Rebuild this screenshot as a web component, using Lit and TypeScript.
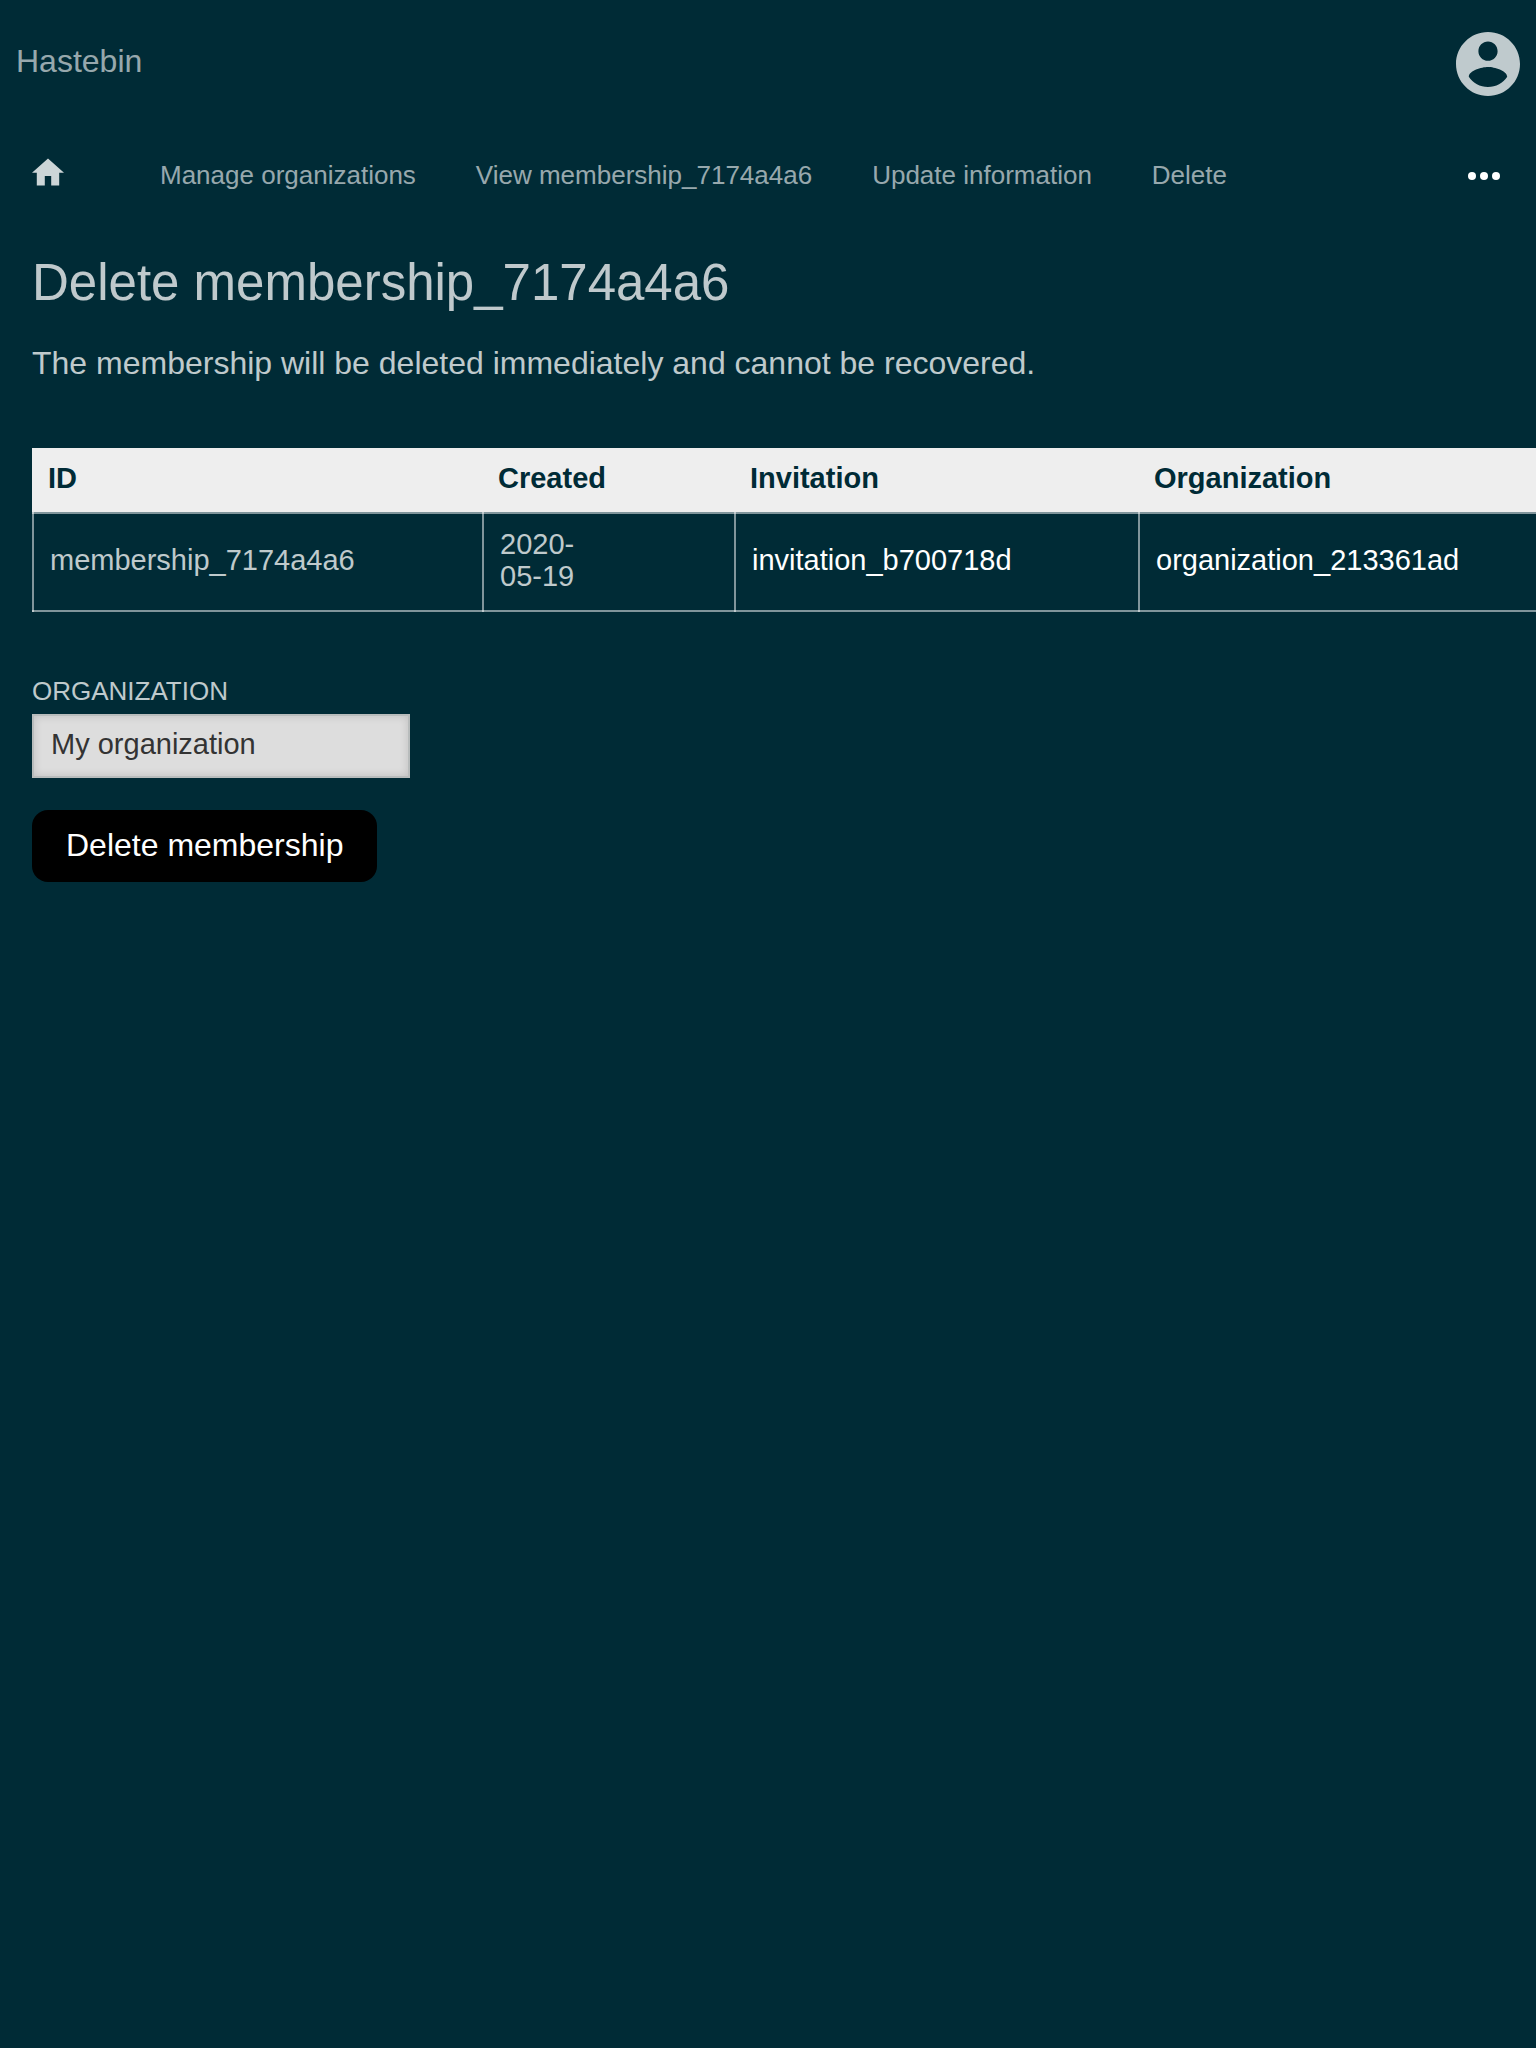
import { LitElement, html, css } from "lit";
import { customElement, property } from "lit/decorators.js";

@customElement("page-header")
class PageHeader extends LitElement {
  static styles = css`
    .bar {
      display: flex;
      justify-content: space-between;
      align-items: flex-start;
      padding: 32px 16px;
    }
    .title {
      font-size: 32px;
      line-height: 58px;
      color: rgba(255, 255, 255, 0.6);
      text-decoration: none;
    }
    .account {
      display: block;
      padding: 0;
      border: 0;
      background: none;
      color: #bfcacd;
      cursor: pointer;
    }
    .account svg {
      display: block;
      width: 64px;
      height: 64px;
    }
  `;

  render() {
    return html`
      <header class="bar">
        <a class="title" href="#home">Hastebin</a>
        <button class="account" type="button" aria-label="Account">
          <svg viewBox="2 2 20 20" fill="currentColor" aria-hidden="true">
            <path
              d="M12 2C6.48 2 2 6.48 2 12s4.48 10 10 10 10-4.48 10-10S17.52 2 12 2zm0 3c1.66 0 3 1.34 3 3s-1.34 3-3 3-3-1.34-3-3 1.34-3 3-3zm0 14.2c-2.5 0-4.71-1.28-6-3.22.03-1.99 4-3.08 6-3.08 1.99 0 5.97 1.09 6 3.08-1.29 1.94-3.5 3.22-6 3.22z"
            />
          </svg>
        </button>
      </header>
    `;
  }
}

@customElement("page-nav")
class PageNav extends LitElement {
  @property({ attribute: false }) items: string[] = [];

  static styles = css`
    .nav {
      display: flex;
      align-items: center;
      height: 96px;
      padding: 0 36px 0 32px;
    }
    .home {
      color: #ccd5d7;
      padding-bottom: 8px;
      margin-right: 96px;
    }
    .home svg {
      display: block;
      width: 32px;
      height: 28px;
    }
    .links {
      display: flex;
      flex: 1;
      gap: 60px;
      margin: 0;
      padding: 0 0 2px;
      list-style: none;
    }
    .link {
      font-size: 26px;
      line-height: 32px;
      color: rgba(255, 255, 255, 0.6);
      text-decoration: none;
      white-space: nowrap;
    }
    .more {
      padding: 0;
      border: 0;
      background: none;
      color: #fff;
      cursor: pointer;
    }
    .more svg {
      display: block;
      width: 32px;
      height: 8px;
    }
  `;

  render() {
    return html`
      <nav class="nav">
        <a class="home" href="#home" aria-label="Home">
          <svg viewBox="2 3 20 17" fill="currentColor" aria-hidden="true">
            <path d="M10 20v-6h4v6h5v-8h3L12 3 2 12h3v8z" />
          </svg>
        </a>
        <ul class="links">
          ${this.items.map((t) => html`<li><a class="link" href="#">${t}</a></li>`)}
        </ul>
        <button class="more" type="button" aria-label="More">
          <svg viewBox="0 0 32 8" fill="currentColor" aria-hidden="true">
            <circle cx="4" cy="4" r="4" />
            <circle cx="16" cy="4" r="4" />
            <circle cx="28" cy="4" r="4" />
          </svg>
        </button>
      </nav>
    `;
  }
}

@customElement("membership-table")
class MembershipTable extends LitElement {
  static styles = css`
    :host {
      display: block;
      overflow: hidden;
    }
    .table {
      width: 100%;
      min-width: 1510px;
      table-layout: fixed;
      border-collapse: separate;
      border-spacing: 0;
      font-size: 29px;
      line-height: 32px;
    }
    .c-id {
      width: 450px;
    }
    .c-created {
      width: 252px;
    }
    .c-invitation {
      width: 404px;
    }
    th {
      padding: 14px 16px 18px;
      background: #eee;
      color: #002b36;
      text-align: left;
    }
    td {
      padding: 16px 16px 20px 18px;
      color: rgba(255, 255, 255, 0.75);
      box-shadow:
        inset 2px 0 rgba(255, 255, 255, 0.5),
        inset 0 2px rgba(255, 255, 255, 0.5),
        inset 0 -2px rgba(255, 255, 255, 0.5);
    }
    .ref {
      color: #fff;
      text-decoration: none;
    }
  `;

  render() {
    return html`
      <table class="table">
        <colgroup>
          <col class="c-id" />
          <col class="c-created" />
          <col class="c-invitation" />
          <col />
        </colgroup>
        <thead>
          <tr>
            <th scope="col">ID</th>
            <th scope="col">Created</th>
            <th scope="col">Invitation</th>
            <th scope="col">Organization</th>
          </tr>
        </thead>
        <tbody>
          <tr>
            <td>membership_7174a4a6</td>
            <td><time datetime="2020-05-19">2020-<br />05-19</time></td>
            <td><a class="ref" href="#invitation">invitation_b700718d</a></td>
            <td><a class="ref" href="#organization">organization_213361ad</a></td>
          </tr>
        </tbody>
      </table>
    `;
  }
}

@customElement("delete-form")
class DeleteForm extends LitElement {
  static styles = css`
    .form {
      display: flex;
      flex-direction: column;
      align-items: flex-start;
    }
    .label {
      margin-bottom: 8px;
      font-size: 26px;
      line-height: 30px;
      text-transform: uppercase;
      color: rgba(255, 255, 255, 0.75);
    }
    .input {
      box-sizing: border-box;
      width: 378px;
      max-width: 100%;
      height: 64px;
      margin: 0 0 32px;
      padding: 0 17px 4px;
      border: 2px solid #b8bcbc;
      border-radius: 0;
      background: #ddd;
      box-shadow: inset 0 0 8px rgba(0, 0, 0, 0.14);
      color: #333;
      font: 29px "Liberation Sans", Arial, sans-serif;
    }
    .submit {
      height: 72px;
      padding: 0 34px 2px;
      border: 0;
      border-radius: 16px;
      background: #000;
      color: #fff;
      font: 32px "Liberation Sans", Arial, sans-serif;
      cursor: pointer;
    }
  `;

  render() {
    return html`
      <form class="form" @submit=${(e: Event) => e.preventDefault()}>
        <label class="label" for="organization">Organization</label>
        <input class="input" id="organization" type="text" readonly .value=${"My organization"} />
        <button class="submit" type="submit">Delete membership</button>
      </form>
    `;
  }
}

@customElement("app-root")
class AppRoot extends LitElement {
  static styles = css`
    :host {
      display: block;
      min-height: 100vh;
      background: #002b36;
      color: rgba(255, 255, 255, 0.75);
      font-family: "Liberation Sans", Arial, sans-serif;
    }
    .content {
      padding: 27px 0 32px 32px;
    }
    .heading {
      margin: 0 0 23px;
      font-size: 51px;
      font-weight: 400;
      line-height: 64px;
    }
    .text {
      margin: 0 0 60px;
      font-size: 32px;
      line-height: 50px;
    }
    .fields {
      display: block;
      margin-top: 64px;
    }
  `;

  private links = [
    "Manage organizations",
    "View membership_7174a4a6",
    "Update information",
    "Delete",
  ];

  render() {
    return html`
      <page-header></page-header>
      <page-nav .items=${this.links}></page-nav>
      <main class="content">
        <h1 class="heading">Delete membership_7174a4a6</h1>
        <p class="text">The membership will be deleted immediately and cannot be recovered.</p>
        <membership-table></membership-table>
        <delete-form class="fields"></delete-form>
      </main>
    `;
  }
}
